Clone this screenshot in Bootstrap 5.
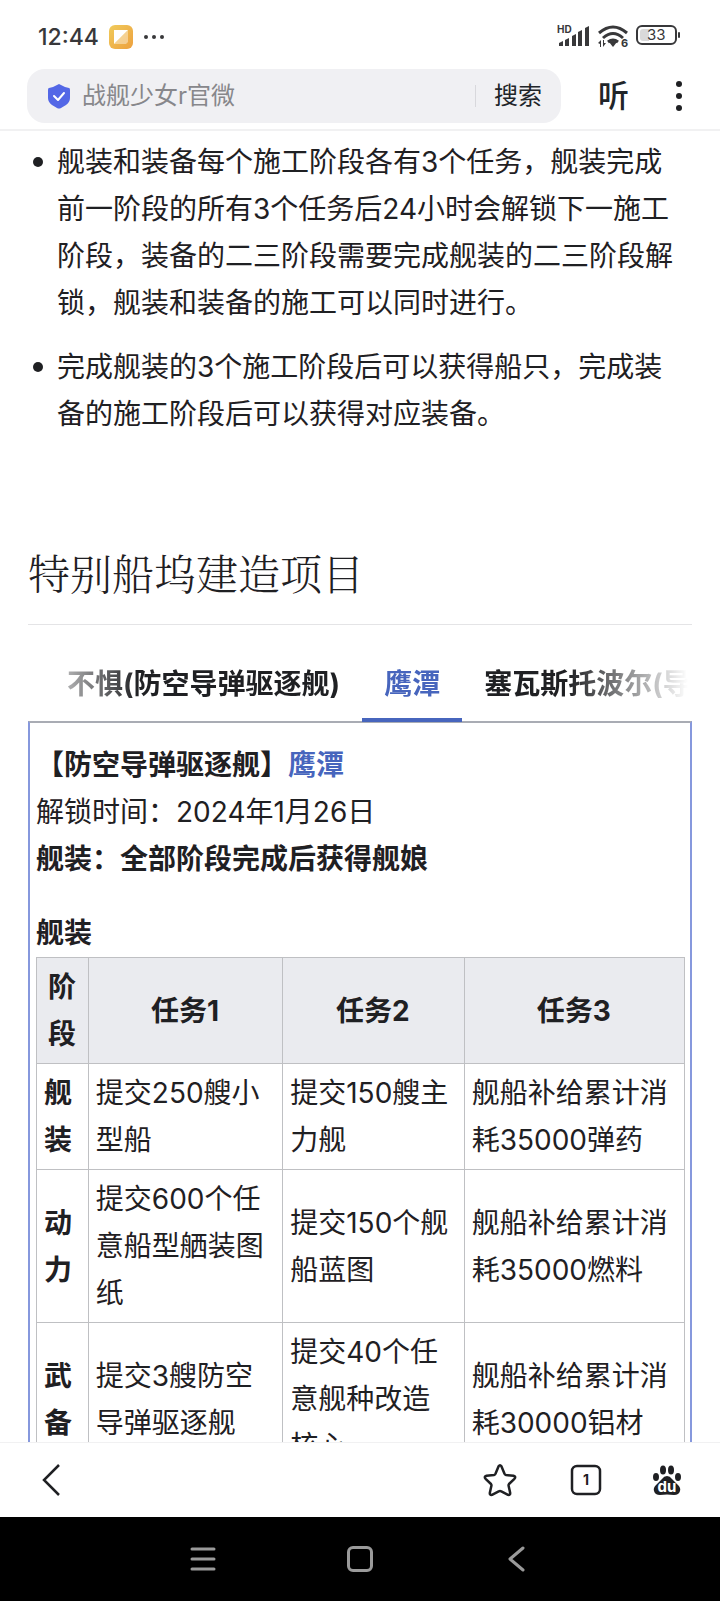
<!DOCTYPE html>
<html lang="zh-CN">
<head>
<meta charset="utf-8">
<meta name="viewport" content="width=device-width, initial-scale=1">
<title>特别船坞建造项目</title>
<link href="https://cdn.jsdelivr.net/npm/bootstrap@5.3.0/dist/css/bootstrap.min.css" rel="stylesheet">
<style>
  :root { --ink: #1f2023; --brand: #4765bd; }
  body { font-family: Inter, "Noto Sans CJK SC", sans-serif; color: var(--ink); background: #fff; }
  svg { display: block; flex: none; }
  .app-shell { height: 100vh; }
  button { color: inherit; }

  /* status bar */
  .status-bar { height: 69px; padding: 5px 39px 0 38px; color: #38383a; }
  .clock { font-size: 23px; line-height: 32px; font-weight: 500; }
  .app-chip { margin-left: 10px; }

  /* search header */
  .search-head { height: 62px; padding: 0 34px 6px 27px; border-bottom: 2px solid #f1f1f2; }
  .search-pill { height: 54px; background: #f0f0f3; border-radius: 18px; padding: 0 19px 0 20px; }
  .search-pill input { font-size: 24px; line-height: 36px; min-width: 0; margin-left: 11px; }
  .search-pill input::placeholder { color: #87878b; opacity: 1; }
  .search-split { width: 1px; height: 22px; background: #d8d8dc; }
  .search-go { font-size: 24px; line-height: 36px; margin-left: 18px; }
  .listen { font-size: 31px; line-height: 40px; font-weight: 500; margin-left: 37px; }
  .more-btn { margin-left: 43px; }

  /* article */
  .article { padding: 8px 28px 0; overflow-y: auto; scrollbar-width: none; min-height: 0; font-size: 28px; line-height: 47px; }
  .article::-webkit-scrollbar { display: none; }
  .notes { padding: 0 8px 0 29px; margin: 0 0 104px; list-style: none; }
  .notes li { position: relative; margin-bottom: 17px; }
  .notes li::before { content: ""; position: absolute; left: -24px; top: 18px; width: 10px; height: 10px; border-radius: 50%; background: var(--ink); }
  .section-title { font-family: "Noto Serif CJK SC", "Noto Sans CJK SC", serif; font-weight: 300; font-size: 42px; line-height: 60px; padding-bottom: 22px; margin-bottom: 30px; border-bottom: 1px solid #e4e4e6; }

  /* ship tabs */
  .ship-tabs { border: 0; padding-left: 17px; overflow: hidden; margin-right: 4px; position: relative; z-index: 1; margin-bottom: -1px;
    -webkit-mask-image: linear-gradient(90deg, transparent, #000 110px, #000 calc(100% - 120px), transparent);
    mask-image: linear-gradient(90deg, transparent, #000 110px, #000 calc(100% - 120px), transparent); }
  .ship-tabs .nav-link { border: 0; border-bottom: 4px solid transparent; border-radius: 0; margin: 0; padding: 6px 22px 10px; color: var(--ink); font-weight: 700; line-height: 47px; white-space: nowrap; }
  .ship-tabs .nav-link.active { color: var(--brand); border-bottom-color: var(--brand); background: none; }
  .ship-panel { border: 2px solid #8698dd; border-top-color: #a9acb4; padding: 19px 5px 0 6px; }
  .ship-panel a { color: var(--brand); text-decoration: none; }

  /* task table */
  .task-table { table-layout: fixed; caption-side: top; border-collapse: collapse; width: 100%; color: var(--ink); margin: 0; }
  .task-table caption { padding: 27px 0 0; color: var(--ink); font-weight: 700; }
  .task-table th, .task-table td { border: 1px solid #bfc0c3; padding: 6px 8px 5px 7px; vertical-align: middle; }
  .task-table thead th { background: #eaebef; text-align: center; }
  .task-table tbody th { text-align: left; }
  .col-stage { width: 8%; }
  .col-one { width: 30%; }
  .col-two { width: 28%; }

  /* bottom bars */
  .tool-bar { height: 75px; padding: 0 37px 0 38px; border-top: 1px solid #f1f1f2; }
  .tabs-btn { margin-left: 53px; }
  .home-btn { margin-left: 49px; }
  .system-bar { height: 84px; background: #000; padding: 0 184px; color: #9a9a9a; }
</style>
</head>
<body>
<div class="app-shell d-flex flex-column">

  <div class="status-bar d-flex align-items-center flex-shrink-0">
    <span class="clock">12:44</span>
    <svg class="app-chip" width="24" height="24" viewBox="0 0 24 24" aria-hidden="true">
      <defs><linearGradient id="og" x1="0" y1="0" x2="1" y2="1"><stop offset="0" stop-color="#f0cb5b"/><stop offset="1" stop-color="#eda03e"/></linearGradient></defs>
      <rect width="24" height="24" rx="6" fill="url(#og)"/>
      <path d="M5 5h14L5 19z" fill="#fff"/><path d="M19 5v12l-2 2H5z" fill="#fff" opacity=".4"/>
    </svg>
    <svg class="ms-2" width="28" height="8" viewBox="0 0 28 8" fill="currentColor" aria-hidden="true"><circle cx="5" cy="4" r="2"/><circle cx="13" cy="4" r="2"/><circle cx="21" cy="4" r="2"/></svg>
    <svg class="ms-auto" width="124" height="32" viewBox="0 -4 124 32" aria-label="信号 无线网络 电量33">
      <g fill="currentColor">
        <text x="0" y="8" font-size="10" font-weight="700" font-family="Inter, sans-serif">HD</text>
        <path d="M2 18l4-2v5H2zM8 15l4-2v8H8zM15 11l4-2v12h-4zM21 7l4-2v16h-4zM28 3l4-2v20h-4z"/>
        <path d="M52 17q4-2 8 0l-4 5z"/>
        <text x="64" y="22" font-size="11" font-weight="700" font-family="Inter, sans-serif">6</text>
        <path d="M41 18l3-3v7h-1v-3zM46 22v-7h1v3h2z"/>
      </g>
      <g fill="none" stroke="currentColor">
        <path d="M42 8Q56-4 70 8M46 13q10-9 20 0M51 17q5-4 10 0" stroke-width="3"/>
        <rect x="80" y="1" width="39" height="18" rx="5" stroke-width="2"/>
      </g>
      <path d="M86 4h6v12h-6q-3 0-3-3V7q0-3 3-3z" fill="#d9d9da"/>
      <rect x="121" y="7" width="2" height="6" rx="1" fill="currentColor"/>
      <text x="90" y="15" font-size="15" fill="currentColor" font-family="Inter, sans-serif">33</text>
    </svg>
  </div>

  <header class="search-head d-flex align-items-center flex-shrink-0">
    <form class="search-pill d-flex align-items-center flex-grow-1" role="search">
      <svg width="24" height="26" viewBox="0 0 24 26" aria-hidden="true"><path d="M12 1Q17 4 22 5q1 0 1 2v8q0 4-4 7l-5 3q-2 1-4 0l-5-3q-4-3-4-7V7q0-2 1-2 5-1 10-4z" fill="#5367e6"/><path d="M7 13l4 4 6-7" fill="none" stroke="#fff" stroke-width="2" stroke-linecap="round" stroke-linejoin="round"/></svg>
      <input type="search" class="border-0 bg-transparent p-0 flex-grow-1" placeholder="战舰少女r官微" aria-label="搜索内容">
      <span class="search-split"></span>
      <button type="button" class="search-go btn p-0 border-0">搜索</button>
    </form>
    <button type="button" class="listen btn p-0 border-0">听</button>
    <button type="button" class="more-btn btn p-0 border-0" aria-label="更多"><svg width="14" height="32" viewBox="0 0 14 32" fill="#1f2023"><circle cx="7" cy="4" r="3"/><circle cx="7" cy="16" r="3"/><circle cx="7" cy="28" r="3"/></svg></button>
  </header>

  <main class="article flex-grow-1">
    <ul class="notes">
      <li>舰装和装备每个施工阶段各有3个任务，舰装完成前一阶段的所有3个任务后24小时会解锁下一施工阶段，装备的二三阶段需要完成舰装的二三阶段解锁，舰装和装备的施工可以同时进行。</li>
      <li>完成舰装的3个施工阶段后可以获得船只，完成装备的施工阶段后可以获得对应装备。</li>
    </ul>

    <h2 class="section-title">特别船坞建造项目</h2>

    <div class="ship-tabs nav nav-tabs flex-nowrap" role="tablist">
      <button class="nav-link" type="button" role="tab">不惧(防空导弹驱逐舰)</button>
      <button class="nav-link active" type="button" role="tab" aria-selected="true">鹰潭</button>
      <button class="nav-link" type="button" role="tab">塞瓦斯托波尔(导弹驱逐舰)</button>
    </div>

    <section class="ship-panel" role="tabpanel">
      <div class="fw-bold">【防空导弹驱逐舰】<a href="#yingtan">鹰潭</a></div>
      <div>解锁时间：2024年1月26日</div>
      <div class="fw-bold">舰装：全部阶段完成后获得舰娘</div>
      <table class="task-table">
        <caption>舰装</caption>
        <colgroup><col class="col-stage"><col class="col-one"><col class="col-two"><col></colgroup>
        <thead>
          <tr><th scope="col">阶段</th><th scope="col">任务1</th><th scope="col">任务2</th><th scope="col">任务3</th></tr>
        </thead>
        <tbody>
          <tr><th scope="row">舰装</th><td>提交250艘小型船</td><td>提交150艘主力舰</td><td>舰船补给累计消耗35000弹药</td></tr>
          <tr><th scope="row">动力</th><td>提交600个任意船型舾装图纸</td><td>提交150个舰船蓝图</td><td>舰船补给累计消耗35000燃料</td></tr>
          <tr><th scope="row">武备</th><td>提交3艘防空导弹驱逐舰</td><td>提交40个任意舰种改造核心</td><td>舰船补给累计消耗30000铝材</td></tr>
        </tbody>
      </table>
    </section>
  </main>

  <nav class="tool-bar d-flex align-items-center flex-shrink-0 bg-white" aria-label="浏览器工具">
    <button type="button" class="btn p-0 border-0 me-auto" aria-label="返回"><svg width="26" height="34" viewBox="0 0 26 34" fill="none" stroke="#1f2023" stroke-width="2.5"><path d="M21 2L6 17l15 15"/></svg></button>
    <button type="button" class="btn p-0 border-0" aria-label="收藏"><svg width="34" height="34" viewBox="0 0 34 34" fill="none" stroke="#1f2023" stroke-width="2.5" stroke-linejoin="round"><path d="M15.600 3.200Q17 1.200 18.400 3.200L21.500 10.800Q22 11.800 23 12L30.500 12.800Q33.300 13.500 31.400 15.800L26 21Q25.400 21.700 25.600 22.700L27.200 30Q27.300 32.400 25 31.800L18.300 28.400Q17 27.800 15.700 28.400L9 31.800Q6.700 32.400 6.800 30L8.400 22.700Q8.600 21.700 8 21L2.600 15.800Q.7 13.500 3.500 12.800L11 12Q12 11.800 12.500 10.800z"/></svg></button>
    <button type="button" class="tabs-btn btn p-0 border-0" aria-label="窗口 1"><svg width="32" height="32" viewBox="0 0 32 32"><rect x="2" y="2" width="28" height="28" rx="5" fill="none" stroke="#1f2023" stroke-width="2.500"/><text x="16" y="21" text-anchor="middle" font-size="14" font-weight="700" fill="#1f2023" font-family="Inter, sans-serif">1</text></svg></button>
    <button type="button" class="home-btn btn p-0 border-0" aria-label="百度首页"><svg width="32" height="32" viewBox="0 0 32 32" fill="#1f2023"><ellipse cx="5" cy="13" rx="3" ry="4"/><ellipse cx="12" cy="6" rx="3" ry="4.500"/><ellipse cx="20" cy="6" rx="3" ry="4.500"/><ellipse cx="27" cy="13" rx="3" ry="4"/><path d="M16 12q3 0 5 3l6 6q3 3 2 6-1 4-6 4-7-1-14 0-5 0-6-4-1-3 2-6l6-6q2-3 5-3z"/><text x="16" y="28" text-anchor="middle" font-size="15" font-weight="700" fill="#fff" font-family="Inter, sans-serif">du</text></svg></button>
  </nav>

  <nav class="system-bar d-flex align-items-center justify-content-between flex-shrink-0" aria-label="系统导航">
    <button type="button" class="btn p-0 border-0" aria-label="最近任务"><svg width="38" height="28" viewBox="0 0 38 28" fill="none" stroke="#9a9a9a" stroke-width="3" stroke-linecap="round"><path d="M8 4h22M8 14h22M8 24h22"/></svg></button>
    <button type="button" class="btn p-0 border-0" aria-label="主页"><svg width="28" height="28" viewBox="0 0 28 28" fill="none" stroke="#9a9a9a" stroke-width="3"><rect x="2.500" y="2.500" width="23" height="23" rx="4.500"/></svg></button>
    <button type="button" class="btn p-0 border-0" aria-label="后退"><svg width="38" height="28" viewBox="0 0 38 28" fill="none" stroke="#9a9a9a" stroke-width="3" stroke-linecap="round" stroke-linejoin="round"><path d="M25 3L12 14l13 11"/></svg></button>
  </nav>
</div>
<script src="https://cdn.jsdelivr.net/npm/bootstrap@5.3.0/dist/js/bootstrap.bundle.min.js"></script>
</body>
</html>
